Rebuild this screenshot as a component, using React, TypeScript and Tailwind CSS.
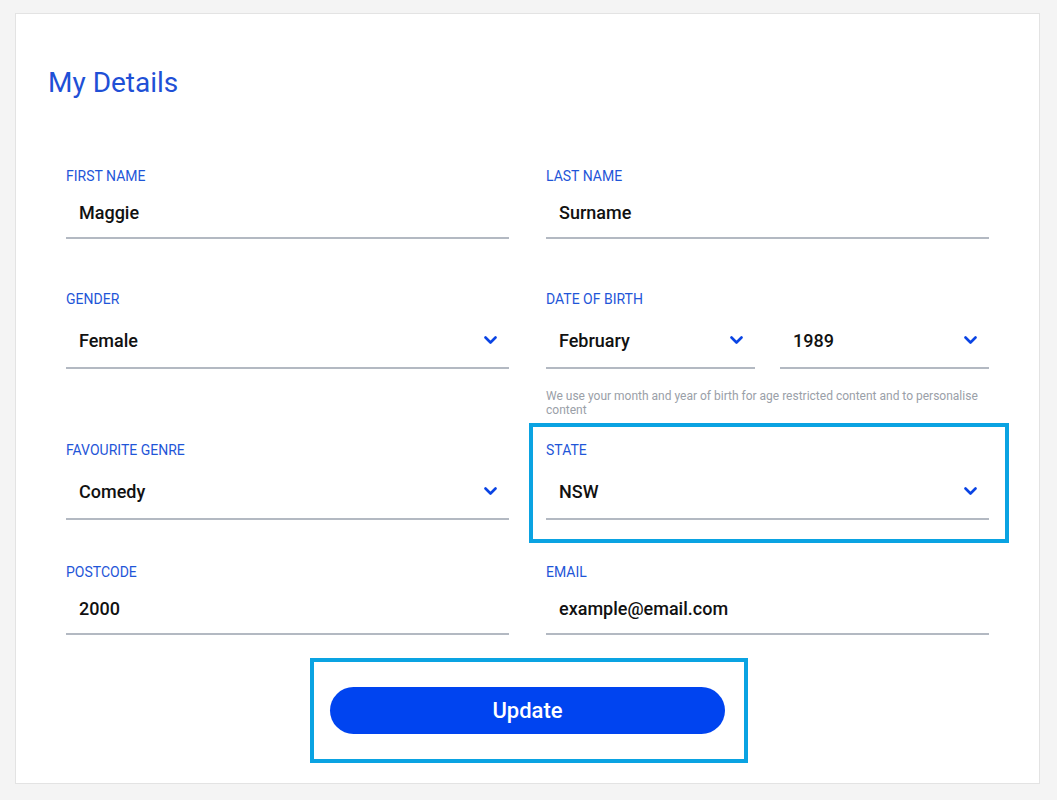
import React from 'react';

const Chevron = () => (
  <svg width="13" height="9" viewBox="0 0 13 9" fill="none" className="shrink-0">
    <path d="M1.5 1.5 L6.5 6.5 L11.5 1.5" stroke="#0a44e4" strokeWidth="2.6" strokeLinecap="round" strokeLinejoin="round" />
  </svg>
);

const Label: React.FC<{ children: React.ReactNode }> = ({ children }) => (
  <div className="text-[14px] leading-[20px] text-[#1f56d8] uppercase">{children}</div>
);

const Input: React.FC<{ value: string }> = ({ value }) => (
  <div className="mt-[5px] h-[48px] pb-[4px] flex items-center pl-[13px] pr-[12px] border-b-2 border-[#b3b9c2] text-[18px] text-[#111] font-medium">
    {value}
  </div>
);

const Select: React.FC<{ value: string }> = ({ value }) => (
  <div className="mt-[5px] h-[55px] flex items-center justify-between pl-[13px] pr-[12px] border-b-2 border-[#b3b9c2] text-[18px] text-[#111] font-medium">
    <span>{value}</span>
    <Chevron />
  </div>
);

const App: React.FC = () => {
  return (
    <div className="min-h-[800px] bg-[#f4f4f4] pt-[13px] px-[15px] pb-[16px]" style={{ fontFamily: 'Roboto, "Noto Sans", sans-serif' }}>
      <div className="bg-white border border-[#e3e3e3] w-[1025px] h-[771px] px-[32px] pt-[52px]">
        <h1 className="text-[28px] leading-[34px] text-[#1f50d6] font-normal">My Details</h1>

        <div className="px-[18px]">
          {/* Name */}
          <div className="grid grid-cols-2 gap-x-[37px] mt-[66px]">
            <div>
              <Label>First Name</Label>
              <Input value="Maggie" />
            </div>
            <div>
              <Label>Last Name</Label>
              <Input value="Surname" />
            </div>
          </div>

          {/* Gender + DOB */}
          <div className="grid grid-cols-2 gap-x-[37px] mt-[50px]">
            <div>
              <Label>Gender</Label>
              <Select value="Female" />
            </div>
            <div>
              <Label>Date of Birth</Label>
              <div className="grid grid-cols-[209px_1fr] gap-x-[25px]">
                <Select value="February" />
                <Select value="1989" />
              </div>
              <p className="mt-[20px] text-[12px] leading-[14px] text-[#9aa0a8]">
                We use your month and year of birth for age restricted content and to personalise content
              </p>
            </div>
          </div>

          {/* Genre + State */}
          <div className="grid grid-cols-2 gap-x-[37px] mt-[23px]">
            <div>
              <Label>Favourite Genre</Label>
              <Select value="Comedy" />
            </div>
            <div className="relative">
              <div className="absolute -left-[17px] -right-[20px] -top-[17px] -bottom-[23px] border-4 border-[#0aa3e2]" />
              <Label>State</Label>
              <Select value="NSW" />
            </div>
          </div>

          {/* Postcode + Email */}
          <div className="grid grid-cols-2 gap-x-[37px] mt-[42px]">
            <div>
              <Label>Postcode</Label>
              <Input value="2000" />
            </div>
            <div>
              <Label>Email</Label>
              <Input value="example@email.com" />
            </div>
          </div>
        </div>

        <div className="flex justify-center mt-[23px] pl-[3px]">
          <div className="w-[438px] h-[105px] border-4 border-[#0aa3e2] pl-[16px] pr-[19px] pt-[25px]">
            <button className="w-full h-[47px] rounded-full bg-[#0044f0] text-white text-[22px] font-medium">
              Update
            </button>
          </div>
        </div>
      </div>
    </div>
  );
};

export default App;
